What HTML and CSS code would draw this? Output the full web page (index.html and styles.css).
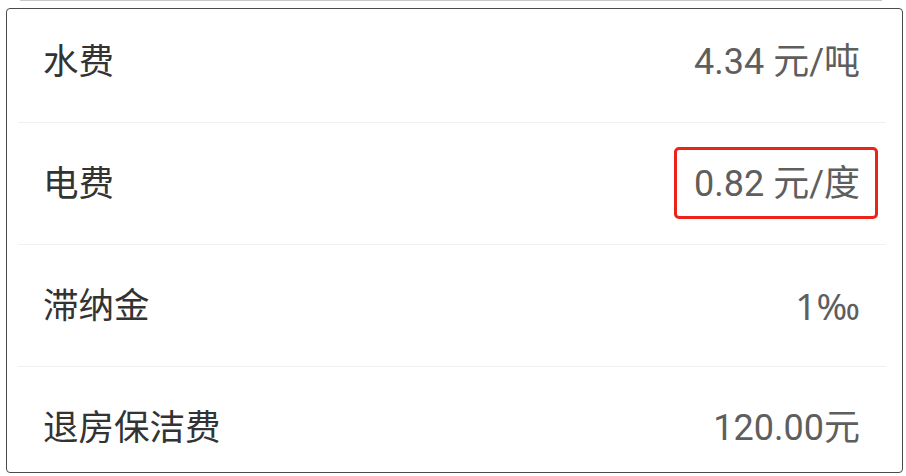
FILE: index.html
```html
<!DOCTYPE html>
<html lang="zh-CN">
<head>
<meta charset="utf-8">
<title>费用</title>
<link rel="stylesheet" href="styles.css">
</head>
<body>
<div class="topline"></div>
<div class="card">
  <div class="row row-first">
    <span class="label">水费</span>
    <span class="value">4.34 元/吨</span>
  </div>
  <div class="sep"></div>
  <div class="row">
    <span class="label">电费</span>
    <span class="value marked">0.82 元/度</span>
  </div>
  <div class="sep"></div>
  <div class="row">
    <span class="label">滞纳金</span>
    <span class="value permille">1‰</span>
  </div>
  <div class="sep"></div>
  <div class="row">
    <span class="label">退房保洁费</span>
    <span class="value">120.00元</span>
  </div>
</div>
</body>
</html>
```
FILE: styles.css
```css
html, body {
  margin: 0;
  padding: 0;
  background: #ffffff;
}
body {
  width: 906px;
  height: 476px;
  overflow: hidden;
  font-family: Roboto, "Noto Sans CJK SC", sans-serif;
}
.topline {
  height: 1px;
  margin: 0 24px 0 20px;
  background: #c8c8c8;
}
.card {
  box-sizing: border-box;
  margin: 7px 0 0 6px;
  width: 897px;
  height: 465px;
  border: 1px solid #4a4a4a;
  border-radius: 4px;
  overflow: hidden;
  background: #fff;
}
.row {
  height: 121px;
  display: flex;
  align-items: center;
  justify-content: space-between;
  padding: 0 42px 0 36px;
}
.row-first {
  box-sizing: border-box;
  height: 113px;
  padding-bottom: 8px;
}
.sep {
  height: 1px;
  margin: 0 16px 0 11px;
  background: #f0f0f0;
}
.label {
  font-size: 35.5px;
  line-height: 40px;
  color: #333333;
}
.value {
  font-size: 36px;
  line-height: 40px;
  color: #5e5e5e;
}
.permille {
  font-family: "Noto Sans", Roboto, sans-serif;
  font-size: 37px;
}
.marked {
  position: relative;
}
.marked::after {
  content: "";
  position: absolute;
  left: -20px;
  right: -18px;
  top: -17px;
  bottom: -15px;
  border: 3px solid #ec2418;
  border-radius: 5px;
}
```
